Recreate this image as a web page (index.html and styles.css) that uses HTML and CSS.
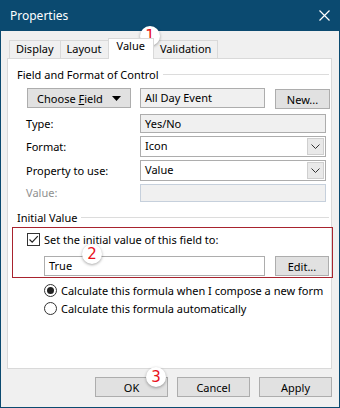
FILE: index.html
```html
<!DOCTYPE html>
<html lang="en">
<head>
    <meta charset="UTF-8">
    <title>Properties</title>
    <link rel="stylesheet" href="styles.css">
</head>
<body>
    <div class="window">
        <div class="titlebar">
            <span class="title">Properties</span>
            <svg class="close" width="11" height="11" viewBox="0 0 11 11">
                <path d="M0.5 0.5 L10.5 10.5 M10.5 0.5 L0.5 10.5" stroke="#fff" stroke-width="1.2" fill="none"/>
            </svg>
        </div>

        <div class="tabs">
            <div class="tab">Display</div>
            <div class="tab">Layout</div>
            <div class="tab active">Value</div>
            <div class="tab">Validation</div>
        </div>

        <div class="panel">
            <div class="group-title"><span>Field and Format of Control</span></div>

            <div class="field-row">
                <button class="btn choose">
                    <span>Choose <u>F</u>ield</span>
                    <svg width="9" height="5" viewBox="0 0 9 5"><path d="M0 0 H9 L4.5 5 Z" fill="#000"/></svg>
                </button>
                <div class="box readonly field-name">All Day Event</div>
                <button class="btn new">New...</button>
            </div>

            <div class="prop-grid">
                <label>Type:</label>
                <div class="box readonly">Yes/No</div>

                <label>Format:</label>
                <div class="box select">Icon
                    <span class="drop"><svg width="9" height="5" viewBox="0 0 9 5"><path d="M0.5 0.5 L4.5 4.5 L8.5 0.5" stroke="#333" fill="none"/></svg></span>
                </div>

                <label>Property to use:</label>
                <div class="box select">Value
                    <span class="drop"><svg width="9" height="5" viewBox="0 0 9 5"><path d="M0.5 0.5 L4.5 4.5 L8.5 0.5" stroke="#333" fill="none"/></svg></span>
                </div>

                <label class="disabled">Value:</label>
                <div class="box disabled-box"></div>
            </div>

            <div class="group-title"><span>Initial Value</span></div>

            <div class="initial">
                <div class="check-row">
                    <span class="checkbox">
                        <svg width="11" height="11" viewBox="0 0 11 11"><path d="M1.5 5.5 L4.2 8.2 L9.8 2.2" stroke="#222" stroke-width="1.2" fill="none"/></svg>
                    </span>
                    <span>Set the initial value of this field to:</span>
                </div>
                <div class="value-row">
                    <div class="box input">True</div>
                    <button class="btn edit">Edit...</button>
                </div>
            </div>

            <div class="radio-row"><span class="radio on"></span>Calculate this formula when I compose a new form</div>
            <div class="radio-row"><span class="radio"></span>Calculate this formula automatically</div>
        </div>

        <div class="footer">
            <button class="btn">OK</button>
            <button class="btn">Cancel</button>
            <button class="btn">Apply</button>
        </div>

        <span class="badge b1">1</span>
        <span class="badge b2">2</span>
        <span class="badge b3">3</span>
    </div>
</body>
</html>
```

FILE: styles.css
```css
:root {
    --title-blue: #0b4a70;
    --face: #f0f0f0;
    --btn-face: #e1e1e1;
    --btn-border: #adadad;
    --tab-border: #d9d9d9;
    --note-red: #a8232e;
}

* {
    box-sizing: border-box;
}

body {
    margin: 0;
    font-family: "Noto Sans", sans-serif;
    font-size: 11px;
    color: #000;
}

.window {
    position: relative;
    width: 340px;
    height: 408px;
    background: var(--face);
    border: 1px solid var(--title-blue);
    border-top: none;
}

.titlebar {
    height: 31px;
    margin: 0 -1px;
    background: var(--title-blue);
    color: #fff;
    display: flex;
    align-items: center;
    justify-content: space-between;
    padding: 0 10px 1px 10px;
    font-size: 12px;
}

/* tabs */
.tabs {
    display: flex;
    align-items: flex-end;
    height: 27px;
    padding-left: 8px;
}

.tab {
    height: 18px;
    padding: 0 6px;
    border: 1px solid var(--tab-border);
    border-bottom: none;
    margin-left: -1px;
    line-height: 16px;
    background: var(--face);
}

.tab:first-child {
    margin-left: 0;
}

.tab.active {
    position: relative;
    z-index: 1;
    height: 21px;
    margin-bottom: -1px;
    background: #fff;
    padding: 0 8px;
    line-height: 14px;
}

.panel {
    height: 311px;
    margin: 0 7px 0 6px;
    background: #fff;
    border: 1px solid var(--tab-border);
}

.group-title {
    display: flex;
    align-items: center;
    height: 16px;
    margin: 7px 2px 0 9px;
}

.group-title::after {
    content: "";
    flex: 1;
    height: 1px;
    margin-left: 4px;
    background: #dcdcdc;
}

.btn {
    font: inherit;
    color: #000;
    background: var(--btn-face);
    border: 1px solid var(--btn-border);
    height: 20px;
    padding: 0;
    margin: 0;
}

.box {
    height: 20px;
    border: 1px solid var(--btn-border);
    padding: 0 4px;
    line-height: 18px;
    position: relative;
}

.readonly {
    background: var(--face);
}

.field-row {
    display: flex;
    gap: 9px;
    margin: 6px 0 0 19px;
}

.choose {
    width: 104px;
    display: flex;
    align-items: center;
    justify-content: center;
    gap: 9px;
}

.field-name {
    width: 125px;
}

.new {
    width: 55px;
    margin-left: 1px;
    margin-top: 1px;
}

.prop-grid {
    display: grid;
    grid-template-columns: 114px 186px;
    grid-template-rows: 19px 21px 21px 18px;
    row-gap: 3px;
    margin: 5px 0 0 18px;
    align-items: center;
}

.prop-grid .box {
    height: 100%;
}

.prop-grid label {
    line-height: 16px;
}

.select {
    background: #fff;
}

.drop {
    position: absolute;
    right: 1px;
    top: 1px;
    bottom: 1px;
    width: 17px;
    border: 1px solid #cfcfcf;
    background: #e9e9e9;
    display: flex;
    align-items: center;
    justify-content: center;
}

.disabled {
    color: #8f8f8f;
}

.disabled-box {
    background: var(--face);
    border-color: #c6d0dc;
}

/* annotated initial value block */
.initial {
    width: 321px;
    height: 51px;
    margin: 2px 0 0 4px;
    border: 1px solid var(--note-red);
    padding: 3px 0 0 14px;
}

.check-row {
    display: flex;
    align-items: center;
    gap: 4px;
    height: 16px;
}

.checkbox {
    width: 13px;
    height: 13px;
    border: 1px solid #333;
    background: #fff;
    display: flex;
    align-items: center;
    justify-content: center;
}

.value-row {
    display: flex;
    gap: 10px;
    margin: 9px 0 0 17px;
}

.input {
    width: 221px;
    background: #fff;
}

.edit {
    width: 54px;
}

.radio-row {
    display: flex;
    align-items: center;
    gap: 4px;
    height: 18px;
    margin-left: 36px;
}

.initial + .radio-row {
    margin-top: 3px;
}

.radio {
    width: 13px;
    height: 13px;
    border: 1px solid #333;
    border-radius: 50%;
    background: #fff;
    position: relative;
}

.radio.on::after {
    content: "";
    position: absolute;
    left: 2px;
    top: 2px;
    width: 7px;
    height: 7px;
    border-radius: 50%;
    background: #222;
}

.footer {
    display: flex;
    justify-content: flex-end;
    gap: 9px;
    margin: 8px 7px 0 0;
}

.footer .btn {
    width: 73px;
}

/* callout numbers */
.badge {
    position: absolute;
    width: 20px;
    height: 20px;
    border-radius: 50%;
    background: #fff;
    box-shadow: 0 1px 3px rgba(0, 0, 0, 0.35);
    color: #e8121c;
    font-family: "DejaVu Sans", sans-serif;
    font-size: 15px;
    line-height: 20px;
    text-align: center;
}

.b1 { left: 139px; top: 26px; }
.b2 { left: 81px; top: 244px; }
.b3 { left: 145px; top: 367px; }
```
